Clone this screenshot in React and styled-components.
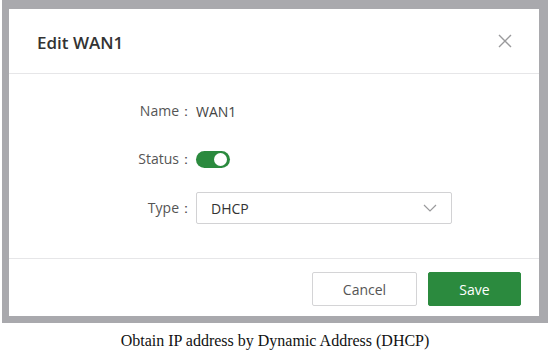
import React from 'react';
import styled, { createGlobalStyle } from 'styled-components';

const GlobalStyle = createGlobalStyle`
  body {
    margin: 0;
    background: #ffffff;
  }
`;

const Page = styled.div`
  width: 550px;
  height: 352px;
  display: flex;
  flex-direction: column;
  align-items: flex-start;
`;

const Frame = styled.div`
  margin-left: 2px;
  width: 530px;
  border-style: solid;
  border-color: #a9a9ad;
  border-width: 9px 9px 7px 7px;
  background: #ffffff;
  font-family: "Open Sans", "Noto Sans", sans-serif;
`;

const Header = styled.div`
  height: 65px;
  display: flex;
  align-items: center;
  justify-content: space-between;
  padding: 0 26px 0 28px;
  border-bottom: 1px solid #e6e6e8;
  box-sizing: border-box;
`;

const Title = styled.div`
  font-size: 17px;
  font-weight: 600;
  color: #333;
  margin-top: 2px;
`;

const Close = styled.button`
  border: none;
  background: none;
  padding: 0;
  width: 16px;
  height: 16px;
  display: flex;
  cursor: pointer;
`;

const Body = styled.div`
  padding: 21px 0 34px;
  display: flex;
  flex-direction: column;
  gap: 16px;
  border-bottom: 1px solid #e6e6e8;
`;

const Row = styled.div`
  display: flex;
  align-items: center;
  height: ${p => p.$h || 32}px;
  margin-top: ${p => p.$mt || 0}px;
`;

const Label = styled.div`
  width: 187px;
  text-align: right;
  font-size: 14px;
  color: #555;
  padding-right: 3px;
  box-sizing: border-box;
`;

const Value = styled.div`
  font-size: 14px;
  color: #444;
`;

const Toggle = styled.div`
  width: 34px;
  height: 17px;
  border-radius: 9px;
  background: #2b8a3e;
  position: relative;
  &::after {
    content: '';
    position: absolute;
    right: 3px;
    top: 2px;
    width: 13px;
    height: 13px;
    border-radius: 50%;
    background: #fff;
  }
`;

const Select = styled.div`
  width: 256px;
  height: 32px;
  border: 1px solid #d2d2d4;
  border-radius: 2px;
  box-sizing: border-box;
  display: flex;
  align-items: center;
  justify-content: space-between;
  padding: 0 14px 0 14px;
  font-size: 14px;
  color: #333;
`;

const Footer = styled.div`
  height: 57px;
  display: flex;
  justify-content: flex-end;
  align-items: flex-start;
  gap: 11px;
  padding: 13px 18px 0 0;
  box-sizing: border-box;
`;

const Button = styled.button`
  width: ${p => p.$w}px;
  height: 34px;
  border-radius: 2px;
  font-family: "Open Sans", "Noto Sans", sans-serif;
  font-size: 14px;
  border: 1px solid ${p => (p.$primary ? '#2b8a3e' : '#d4d4d6')};
  background: ${p => (p.$primary ? '#2b8a3e' : '#fff')};
  color: ${p => (p.$primary ? '#fff' : '#555')};
  cursor: pointer;
`;

const Caption = styled.div`
  width: 550px;
  text-align: center;
  font-family: "Liberation Serif", serif;
  font-size: 16px;
  color: #111;
  margin-top: 9px;
`;

export default function App() {
  return (
    <Page>
      <GlobalStyle />
      <Frame>
        <Header>
          <Title>Edit WAN1</Title>
          <Close aria-label="close">
            <svg width="16" height="16" viewBox="0 0 16 16">
              <path d="M2 2 L14 14 M14 2 L2 14" stroke="#9a9a9c" strokeWidth="1.4" fill="none" />
            </svg>
          </Close>
        </Header>
        <Body>
          <Row>
            <Label>Name：</Label>
            <Value>WAN1</Value>
          </Row>
          <Row>
            <Label>Status：</Label>
            <Toggle />
          </Row>
          <Row $mt={1}>
            <Label>Type：</Label>
            <Select>
              <span>DHCP</span>
              <svg width="14" height="8" viewBox="0 0 14 8">
                <path d="M1 1 L7 7 L13 1" stroke="#9a9a9c" strokeWidth="1.2" fill="none" />
              </svg>
            </Select>
          </Row>
        </Body>
        <Footer>
          <Button $w={105}>Cancel</Button>
          <Button $w={93} $primary>Save</Button>
        </Footer>
      </Frame>
      <Caption>Obtain IP address by Dynamic Address (DHCP)</Caption>
    </Page>
  );
}
